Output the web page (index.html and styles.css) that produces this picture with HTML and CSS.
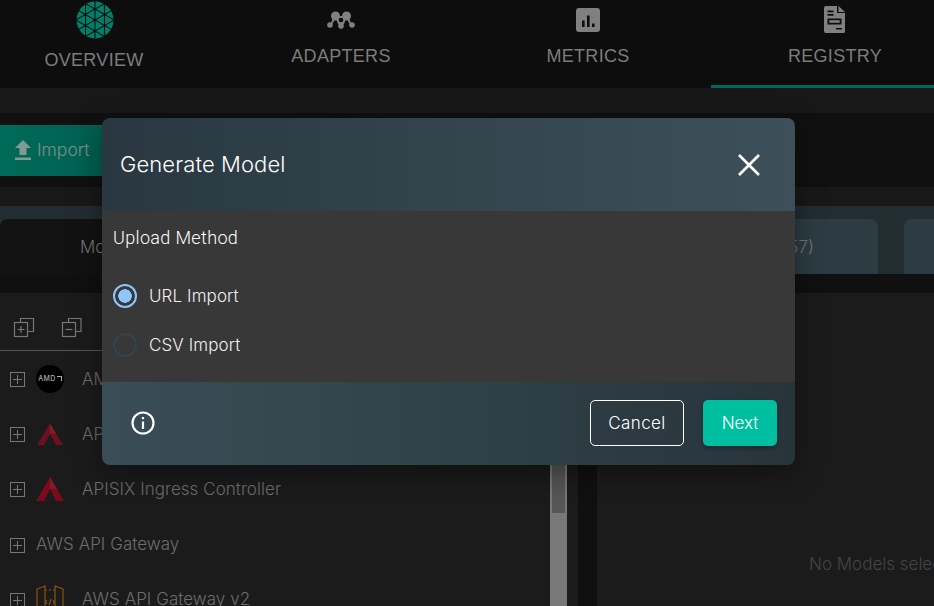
FILE: index.html
```html
<!DOCTYPE html>
<html lang="en">
<head>
    <meta charset="UTF-8">
    <title>Registry</title>
    <link rel="stylesheet" href="styles.css">
</head>
<body>
    <nav class="topnav">
        <a class="navitem navitem-logo">
            <svg width="38" height="38" viewBox="0 0 38 38">
                <defs><clipPath id="logoclip"><circle cx="19" cy="19" r="18.5"/></clipPath></defs>
                <circle cx="19" cy="19" r="18.5" fill="#00806a"/>
                <g clip-path="url(#logoclip)" stroke="#0d0d0d" stroke-width="1.1" fill="none">
                    <path d="M19 0V38M9.5 0V38M28.5 0V38"/>
                    <path d="M-9 3L47 35M-9 -8L47 24M-9 14L47 46"/>
                    <path d="M-9 35L47 3M-9 24L47 -8M-9 46L47 14"/>
                </g>
            </svg>
            <span>OVERVIEW</span>
        </a>
        <a class="navitem">
            <svg width="30" height="28" viewBox="0 0 30 28" fill="#808080">
                <circle cx="4" cy="19" r="2.8"/>
                <circle cx="15" cy="20" r="2.8"/>
                <circle cx="26" cy="19" r="2.8"/>
                <circle cx="9.500" cy="10" r="4.500"/>
                <circle cx="20.500" cy="10" r="4.500"/>
                <path d="M4 19L8 10L10.500 11L5 20ZM26 19L22 10L19.500 11L25 20ZM9 10H21L18 18L15 20L12 18Z"/>
                <circle cx="15" cy="14" r="2.300" fill="#0d0d0d"/>
            </svg>
            <span>ADAPTERS</span>
        </a>
        <a class="navitem">
            <svg width="28" height="28" viewBox="0 0 28 28">
                <rect x="2" y="2" width="24" height="24" rx="3" fill="#808080"/>
                <path d="M8 14.500h2.600V21H8zM13 9.500h2.600V21H13zM18 17.500h2.600V21H18z" fill="#0d0d0d"/>
            </svg>
            <span>METRICS</span>
        </a>
        <a class="navitem navitem-active">
            <svg width="28" height="28" viewBox="0 0 28 28">
                <path d="M5 0H16V7H24V25.500Q24 27 22.500 27H5Q3 27 3 25V2Q3 0 5 0ZM17.500 0L24 6H17.500Z" fill="#808080"/>
                <path d="M6.500 4.500h6V6.300h-6zM6.500 8h6v1.800h-6zM6.500 12.500h14v6h-14zM15 22h6v1.500h-6z" fill="#0d0d0d"/>
                <rect x="8.300" y="14.200" width="10.400" height="2.600" fill="#808080"/>
            </svg>
            <span>REGISTRY</span>
        </a>
    </nav>

    <div class="band"></div>

    <div class="toolbar">
        <button class="importbtn">
            <svg width="18" height="20" viewBox="0 0 18 20" fill="#7f9b92">
                <path d="M9 0L17 8H12.500V15H5.500V8H1ZM1 17.500H17V20H1Z"/>
            </svg>
            Import
        </button>
    </div>

    <div class="band band-low"></div>

    <div class="tabs">
        <div class="tab tab-active"><span>Models (214)</span></div>
        <div class="tab tab-second"><span>Relationships (57)</span></div>
        <div class="tab tab-third"></div>
    </div>

    <div class="panels">
        <section class="panel panel-list">
            <div class="listcol">
                <div class="listtools">
                    <svg width="22" height="22" viewBox="0 0 22 22" fill="none" stroke="#777" stroke-width="1.200">
                        <path d="M7.500 5V1.500H20.500V14.500H15"/>
                        <rect x="1.500" y="5.500" width="13" height="14"/>
                        <path d="M4.500 12.500H11.500M8 9V16"/>
                    </svg>
                    <svg width="22" height="22" viewBox="0 0 22 22" fill="none" stroke="#777" stroke-width="1.200">
                        <path d="M7.500 5V1.500H20V14.500H15"/>
                        <rect x="1.500" y="5.500" width="13" height="14"/>
                        <path d="M4.500 12.500H11.500"/>
                    </svg>
                </div>
                <ul class="modellist">
                    <li>
                        <span class="plusbox"></span>
                        <span class="amdlogo">AMD<i class="amdmark"></i></span>
                        <span>AMD GPU</span>
                    </li>
                    <li>
                        <span class="plusbox"></span>
                        <svg class="rowicon" width="28" height="28" viewBox="0 0 28 28">
                            <path d="M14 3.500L27 25H20L14 14L8 25H1Z" fill="#6e1022"/>
                            <path d="M14 3.500L20 13.500L14 14Z" fill="#7f1c2e"/>
                        </svg>
                        <span>APISIX</span>
                    </li>
                    <li>
                        <span class="plusbox"></span>
                        <svg class="rowicon" width="28" height="28" viewBox="0 0 28 28">
                            <path d="M14 2L28 26H20L14 14L8 26H0Z" fill="#7a0a1c"/>
                            <path d="M14 2L21 14L14 14Z" fill="#84192b"/>
                        </svg>
                        <span>APISIX Ingress Controller</span>
                    </li>
                    <li>
                        <span class="plusbox"></span>
                        <span>AWS API Gateway</span>
                    </li>
                    <li>
                        <span class="plusbox"></span>
                        <svg class="rowicon" width="28" height="28" viewBox="0 0 28 28" fill="none" stroke="#8a5410" stroke-width="1.200">
                            <path d="M1 4L9 1V27L1 24ZM19 1L27 4V24L19 27Z"/>
                            <path d="M9 5H19M9 23H19" stroke-dasharray="2 2"/>
                            <path d="M11 15L9.500 17L11 19M17 15L18.500 17L17 19M15 14L13 20"/>
                        </svg>
                        <span>AWS API Gateway v2</span>
                    </li>
                </ul>
            </div>
            <div class="scrolltrack"><div class="scrollthumb"></div></div>
        </section>
        <section class="panel panel-detail">
            <p>No Models selected</p>
        </section>
    </div>

    <div class="dialog">
        <header class="dialog-head">
            <h2>Generate Model</h2>
            <svg width="26" height="26" viewBox="0 0 26 26" stroke="#fff" stroke-width="2.600">
                <path d="M3 3L23 23M23 3L3 23"/>
            </svg>
        </header>
        <div class="dialog-body">
            <div class="fieldlabel">Upload Method</div>
            <label class="radiorow">
                <span class="radio radio-on"></span>
                URL Import
            </label>
            <label class="radiorow">
                <span class="radio"></span>
                CSV Import
            </label>
        </div>
        <footer class="dialog-foot">
            <svg width="24" height="24" viewBox="0 0 24 24" fill="none" stroke="#fff" stroke-width="2.200">
                <circle cx="12" cy="12" r="10.500"/>
                <path d="M12 10.500V18"/>
                <path d="M12 6V8.300"/>
            </svg>
            <div class="actions">
                <button class="btn btn-outline">Cancel</button>
                <button class="btn btn-next">Next</button>
            </div>
        </footer>
    </div>
</body>
</html>
```

FILE: styles.css
```css
* {
    box-sizing: border-box;
}
html, body {
    height: 100%;
}
body {
    margin: 0;
    overflow: hidden;
    background: #101010;
    font-family: Inter, "Open Sans", sans-serif;
    display: flex;
    flex-direction: column;
}
.topnav {
    flex: none;
    height: 88px;
    margin-left: -30px;
    display: grid;
    grid-template-columns: repeat(4, 247px);
    background: #0d0d0d;
}
.navitem {
    display: flex;
    flex-direction: column;
    align-items: center;
    padding-top: 6px;
    gap: 12px;
    font-family: "Liberation Sans", Arial, sans-serif;
    font-size: 18px;
    letter-spacing: 0.3px;
    color: #7c7c7c;
}
.navitem span {
    padding-left: 1px;
}
.navitem-logo {
    padding-top: 1px;
    gap: 11px;
}
.navitem-logo svg {
    margin-left: 2px;
}
.navitem-active {
    border-bottom: 3px solid #00685a;
}
.band {
    flex: none;
    height: 25px;
    background: #181818;
}
.band-low {
    height: 19px;
}
.toolbar {
    flex: none;
    height: 74px;
    padding-top: 12px;
    background: #101010;
}
.importbtn {
    width: 110px;
    height: 51px;
    padding: 0 0 2px 14px;
    border: 0;
    border-radius: 0 5px 5px 0;
    display: flex;
    align-items: center;
    gap: 5px;
    background: linear-gradient(90deg, #006a58, #005f50);
    color: #7d8f8a;
    font-family: inherit;
    font-size: 17.500px;
    font-weight: 300;
}
.tabs {
    flex: none;
    height: 68px;
    padding-top: 13px;
    display: flex;
    background: #222d32;
}
.tab {
    flex: none;
    height: 55px;
    border-radius: 8px 8px 0 0;
    background: #2d3c43;
    color: #777;
    font-size: 17px;
    font-weight: 300;
    display: flex;
    align-items: center;
}
.tab-active {
    width: 440px;
    padding-left: 80px;
    background: #121212;
}
.tab-second {
    width: 438px;
    padding-left: 233px;
    white-space: nowrap;
}
.tab-third {
    width: 60px;
    margin-left: 26px;
}
.panels {
    flex: 1;
    min-height: 0;
    margin-top: 19px;
    display: flex;
    gap: 19px;
}
.panel {
    background: #1b1b1b;
    overflow: hidden;
}
.panel-list {
    width: 578px;
    display: flex;
    padding-right: 11px;
}
.listcol {
    flex: 1;
    min-width: 0;
}
.listtools {
    height: 58px;
    padding: 24px 0 0 13px;
    display: flex;
    gap: 26px;
    border-bottom: 1px solid #555;
}
.modellist {
    margin: 0;
    padding: 0 0 0 10px;
    list-style: none;
}
.modellist li {
    height: 55.200px;
    display: flex;
    align-items: center;
    gap: 11px;
    color: #6d6d6d;
    font-size: 17px;
    font-weight: 300;
    letter-spacing: 0.05px;
    white-space: nowrap;
}
.plusbox {
    flex: none;
    width: 15px;
    height: 15px;
    margin-top: 2px;
    border: 1px solid #777;
    background:
        linear-gradient(#777, #777) center / 9px 1px no-repeat,
        linear-gradient(#777, #777) center / 1px 9px no-repeat;
}
.amdlogo {
    flex: none;
    width: 28px;
    height: 28px;
    margin-right: 7px;
    border-radius: 50%;
    background: #000;
    color: #aaa;
    font-size: 7px;
    font-weight: 500;
    letter-spacing: 0.4px;
    text-align: center;
    line-height: 28px;
}
.amdmark {
    display: inline-block;
    width: 5px;
    height: 5px;
    margin-left: 1px;
    border-top: 1px solid #aaa;
    border-right: 1px solid #aaa;
}
.rowicon {
    flex: none;
    margin-right: 7px;
}
.scrolltrack {
    flex: none;
    width: 17px;
    margin-top: 100px;
    padding: 0 2px;
    background: #787878;
}
.scrollthumb {
    height: 120px;
    background: #565656;
}
.panel-detail {
    flex: 1;
    min-width: 0;
    padding: 261px 0 0 212px;
    white-space: nowrap;
}
.panel-detail p {
    margin: 0;
    color: #444;
    font-size: 17px;
    font-weight: 300;
}
.dialog {
    position: absolute;
    left: 102px;
    top: 118px;
    width: 693px;
    height: 347px;
    display: flex;
    flex-direction: column;
    border-radius: 8px;
    overflow: hidden;
    color: #fff;
    box-shadow: 0 8px 30px rgba(0, 0, 0, 0.4);
}
.dialog-head {
    flex: none;
    height: 93px;
    padding: 0 33px 0 18px;
    display: flex;
    align-items: center;
    justify-content: space-between;
    background: linear-gradient(90deg, #293840, #3d505a);
}
.dialog-head h2 {
    margin: 0 0 2px;
    font-size: 22px;
    font-weight: 300;
    letter-spacing: 0.1px;
}
.dialog-body {
    flex: 1;
    padding: 15px 11px 0;
    background: #383838;
}
.fieldlabel {
    height: 24px;
    margin-bottom: 21px;
    font-family: Roboto, sans-serif;
    font-size: 18px;
    font-weight: 300;
    letter-spacing: 0.35px;
    line-height: 24px;
}
.radiorow {
    height: 49px;
    display: flex;
    align-items: center;
    gap: 12px;
    color: #eee;
    font-size: 17px;
    font-weight: 300;
    letter-spacing: 0.1px;
}
.radio {
    width: 24px;
    height: 24px;
    border: 2.500px solid #33444c;
    border-radius: 50%;
}
.radio-on {
    border-color: #8fc5ff;
    background: radial-gradient(circle, #8fc5ff 0 6.500px, transparent 7px);
}
.dialog-foot {
    flex: none;
    height: 83px;
    padding: 0 18px 2px 29px;
    display: flex;
    align-items: center;
    justify-content: space-between;
    background: linear-gradient(90deg, #3a4d56, #27353b);
}
.actions {
    display: flex;
    gap: 19px;
}
.btn {
    height: 46px;
    border-radius: 5px;
    font-family: inherit;
    font-size: 17px;
    font-weight: 300;
    color: #fff;
}
.btn-outline {
    width: 94px;
    background: transparent;
    border: 1px solid #fff;
    letter-spacing: 0.4px;
}
.btn-next {
    width: 74px;
    border: 0;
    background: #00bfa0;
    box-shadow: 0 2px 4px rgba(0, 0, 0, 0.3);
}
```
